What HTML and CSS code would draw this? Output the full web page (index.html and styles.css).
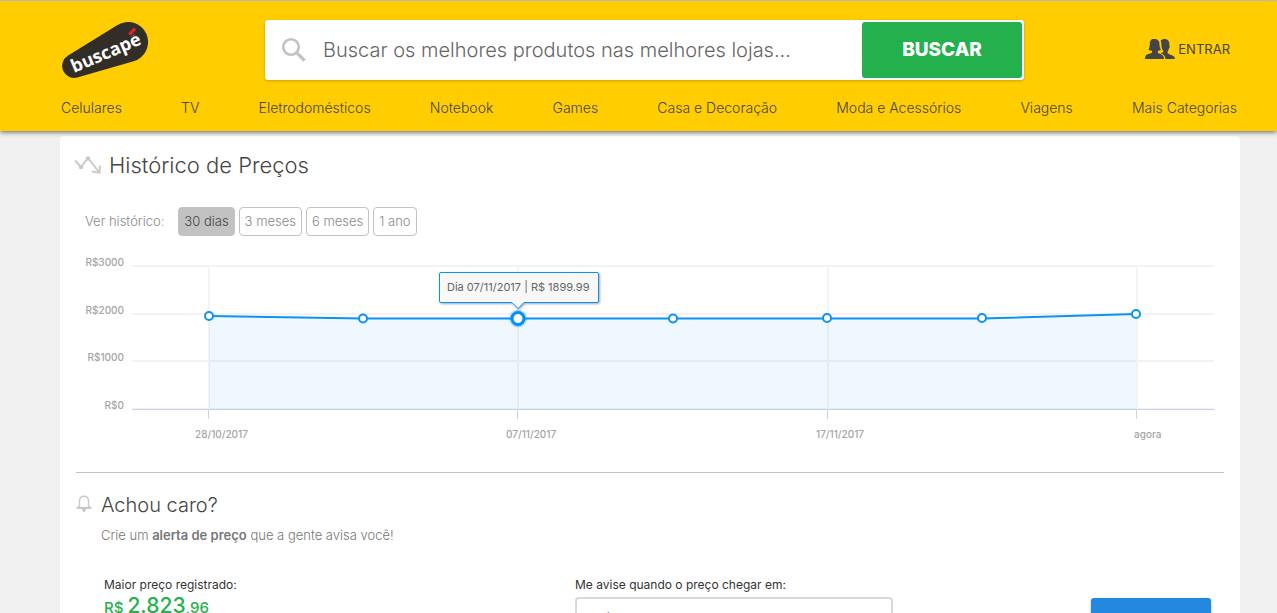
FILE: index.html
```html
<!DOCTYPE html>
<html lang="pt-BR">
<head>
<meta charset="utf-8">
<title>Buscapé - Histórico de Preços</title>
<link rel="stylesheet" href="styles.css">
</head>
<body>
<header class="header">
  <div class="topbar">
    <a class="logo" href="#" aria-label="buscapé">
      <svg width="86" height="56" viewBox="0 0 86 56">
        <path fill="#322e27" d="M5.7 33.8 55.5 3A20 20 0 1 1 71.6 39.2L15.3 55.5A12 12 0 0 1 5.7 33.8Z"/>
        <text class="logo-text" x="0" y="0" transform="translate(12 51) rotate(-23)">buscapé</text>
        <path stroke="#322e27" stroke-width="6" d="M68 12.600 72.600 8"/>
        <path stroke="#d9242c" stroke-width="3.4" d="M67.4 12.600 73 6.600"/>
      </svg>
    </a>
    <form class="search">
      <svg class="search-icon" width="26" height="26" viewBox="0 0 26 26" fill="none" stroke="#c3c3c3">
        <circle cx="10" cy="10" r="7.8" stroke-width="2.600"/>
        <path stroke-width="3.400" d="m15.600 15.600 8 8"/>
      </svg>
      <input class="search-input" type="text" aria-label="Buscar" placeholder="Buscar os melhores produtos nas melhores lojas...">
      <button class="search-button" type="button">BUSCAR</button>
    </form>
    <a class="login" href="#">
      <svg width="30" height="20" viewBox="0 0 30 20" fill="#454545">
        <path d="M9 0C5.8 0 4.800 2 4.800 5c0 2.600-.5 4.400-1.400 5.600 1 .9 2.300 1.200 3.600 1.200v1.600c-1.400 1.200-5.400 1.600-6.400 3.400C.1 17.800 0 19 0 20h19c0-1-.2-2.400-.8-3.200-1.200-1.600-4.200-2-5.400-3.400v-1.600c1.300 0 2.400-.4 3.200-1.200C14.800 9.200 14.600 7.400 14.500 5 14.400 2 12.800 0 9 0Z"/>
        <path d="M15.600 1.600C16.600.5 18 0 19.600 0c3.200 0 4.800 2 4.800 5 0 1-.1 1.400-.1 1.800.8.3.4 2.400-.4 2.800-.3 1.400-.8 2.200-1.300 2.800v1.800c1.200 1.200 4.600 1.800 6.200 3 1 .8 1.200 2.400 1.200 3.600h-9.600c0-1.600-.2-3.200-1.200-4.400-1-1-2.800-1.600-4-2.400 1.200 0 2.600-.6 3.400-1.600-1.800-2.400-2.200-4-2.200-7 0-1.400-.2-2.600-.8-3.800Z"/>
      </svg>
      <span>ENTRAR</span>
    </a>
  </div>
  <nav class="nav">
    <a href="#">Celulares</a>
    <a href="#">TV</a>
    <a href="#">Eletrodomésticos</a>
    <a href="#">Notebook</a>
    <a href="#">Games</a>
    <a href="#">Casa e Decoração</a>
    <a href="#">Moda e Acessórios</a>
    <a href="#">Viagens</a>
    <a href="#">Mais Categorias</a>
  </nav>
</header>
<main class="card">
  <section class="history">
    <h2 class="title">
      <svg width="28" height="20" viewBox="0 0 28 20" fill="none" stroke="#cacaca" stroke-width="2">
        <path d="M1 5.500 7 12 14 3l11 14"/>
        <path d="m18 16.500 7.500 1.200L26 10.500"/>
        <circle cx="7" cy="12" r="1.300"/>
        <circle cx="14" cy="3.500" r="1.300"/>
      </svg>
      Histórico de Preços
    </h2>
    <div class="periods">
      <span class="periods-label">Ver histórico:</span>
      <button class="period period-active" type="button">30 dias</button>
      <button class="period" type="button">3 meses</button>
      <button class="period" type="button">6 meses</button>
      <button class="period" type="button">1 ano</button>
    </div>
    <svg class="chart" viewBox="0 0 1148 200" role="img" aria-label="Histórico de preços">
      <g class="grid">
        <path d="M56 16H1138M56 64H1138M56 111H1138M56 159H1138"/>
        <path d="M133 16V159M442 16V159M752 16V159M1061 16V159"/>
      </g>
      <path class="area" d="M133 66 287 68.500H597L751 68H906L1060 64V159H133Z"/>
      <path class="axis" d="M56 159.500H1138M132.500 159V169M441.500 159V169M751.500 159V169M1060.500 159V169"/>
      <path class="line" d="M133 66 287 68.500H597L751 68.500H906L1060 64"/>
      <g class="points">
        <circle cx="133" cy="66" r="4"/>
        <circle cx="287" cy="68.500" r="4"/>
        <circle cx="597" cy="68.500" r="4"/>
        <circle cx="751" cy="68" r="4"/>
        <circle cx="906" cy="68" r="4"/>
        <circle cx="1060" cy="64" r="4"/>
      </g>
      <circle class="halo" cx="442" cy="68.500" r="9"/>
      <circle class="point-active" cx="442" cy="68.500" r="6"/>
      <path class="tooltip" d="M365 22.500H521Q522.500 22.500 522.500 24V51Q522.500 52.500 521 52.500H448L442 58.500 436 52.500H365Q363.500 52.500 363.500 51V24Q363.500 22.500 365 22.500Z"/>
      <text class="tooltip-text" x="371" y="41">Dia 07/11/2017 | R$ 1899.99</text>
      <g class="labels labels-y">
        <text x="48" y="16">R$3000</text>
        <text x="48" y="64">R$2000</text>
        <text x="48" y="111">R$1000</text>
        <text x="48" y="159">R$0</text>
      </g>
      <g class="labels">
        <text x="119" y="188">28/10/2017</text>
        <text x="430" y="188">07/11/2017</text>
        <text x="740" y="188">17/11/2017</text>
        <text x="1058" y="188">agora</text>
      </g>
    </svg>
  </section>
  <section class="alert">
    <div class="alert-head">
      <svg class="bell" width="16" height="18" viewBox="0 0 16 18" fill="none" stroke="#c8c8c8" stroke-width="1.400">
        <path d="M3.500 11V6C3.500 2.800 5 1.200 8 1.200S12.500 2.800 12.500 6v5L14.600 12.800H1.400Z"/>
        <path d="M1.500 13.200h13M6 14.800h4M7 16.200h2"/>
      </svg>
      <div>
        <h2 class="subtitle">Achou caro?</h2>
        <p class="lead">Crie um <b>alerta de preço</b> que a gente avisa você!</p>
      </div>
    </div>
    <div class="alert-form">
      <div>
        <div class="field-label">Maior preço registrado:</div>
        <div class="price">R$ <span class="price-main">2.823</span>,96</div>
      </div>
      <div>
        <label class="field-label" for="target">Me avise quando o preço chegar em:</label>
        <input class="target" id="target" type="text" value="R$">
      </div>
      <button class="create" type="button" aria-label="Criar alerta"></button>
    </div>
  </section>
</main>
</body>
</html>
```
FILE: styles.css
```css
* { box-sizing: border-box; }
html { height: 100%; overflow: hidden; }
body {
  margin: 0;
  background: #f0f0f0;
  color: #454545;
  font-family: Inter, "Open Sans", sans-serif;
  font-size: 13px;
  font-weight: 300;
}
a { color: inherit; text-decoration: none; }
h2, p { margin: 0; font-weight: 300; }
button, input { font-family: inherit; }

.header {
  position: relative;
  padding: 19px 37px 13px 60px;
  border-top: 1px solid #b8b8b8;
  background: #ffcd00;
  box-shadow: 0 1px 5px rgba(0, 0, 0, .6);
}
.topbar { display: flex; align-items: center; }
.logo { display: flex; flex: 0 0 205px; padding-left: 2px; }
.logo-text {
  fill: #fff;
  font-family: "Open Sans", sans-serif;
  font-size: 18px;
  font-weight: 700;
}
.search {
  display: flex;
  flex: 1;
  align-items: center;
  height: 60px;
  padding: 2px;
  border-radius: 3px;
  background: #fff;
  box-shadow: 0 1px 3px rgba(0, 0, 0, .2);
}
.search-icon { flex: none; margin-left: 14px; }
.search-input {
  flex: 1;
  min-width: 0;
  height: 56px;
  padding: 0 16px;
  border: 0;
  background: none;
  font-size: 20px;
  font-weight: 300;
  outline: 0;
}
.search-input::placeholder { color: #666; opacity: 1; }
.search-button {
  width: 160px;
  height: 56px;
  padding: 0 0 2px;
  border: 0;
  border-radius: 3px;
  background: #24b14d;
  color: #fff;
  font-size: 19px;
  font-weight: 800;
}
.login {
  display: flex;
  flex: 0 0 216px;
  align-items: center;
  justify-content: flex-end;
  gap: 3px;
  padding: 0 10px 2px 0;
  font-weight: 400;
}
.nav {
  display: flex;
  justify-content: space-between;
  margin-top: 18px;
  padding: 0 3px 0 1px;
  font-size: 14px;
  line-height: 20px;
}

.card {
  margin: 5px 37px 0 60px;
  padding: 0 16px 32px;
  border-radius: 4px;
  background: #fff;
}
.history { border-bottom: 1px solid #c2c2c2; padding-bottom: 22px; }
.title {
  display: flex;
  align-items: center;
  gap: 7px;
  padding-top: 13px;
  font-size: 22px;
  line-height: 32px;
}
.title svg { margin-left: -2px; }
.periods {
  display: flex;
  align-items: center;
  gap: 4px;
  margin: 26px 0 14px 9px;
  color: #8a8a8a;
}
.periods-label { margin-right: 10px; padding-bottom: 2px; }
.period {
  height: 29px;
  padding: 0 5px 2px;
  border: 1px solid #c2c2c2;
  border-radius: 4px;
  background: #fff;
  color: #8a8a8a;
  font-size: 13px;
  font-weight: 300;
}
.period-active { background: #c2c2c2; color: #454545; }

.chart { display: block; width: 100%; height: auto; }
.grid { fill: none; stroke: #f3f3f3; stroke-width: 2; }
.area { fill: #0080f8; fill-opacity: .06; }
.axis { fill: none; stroke: #c6d2e6; }
.line { fill: none; stroke: #0c92f2; stroke-width: 2; }
.points { fill: #fff; stroke: #0c92f2; stroke-width: 2; }
.halo { fill: #0090f8; fill-opacity: .3; }
.point-active { fill: #fff; stroke: #0090f8; stroke-width: 3; }
.tooltip {
  fill: #f8f8f8;
  stroke: #0c92f2;
  filter: drop-shadow(1px 1px 1px rgba(0, 0, 0, .35));
}
.tooltip-text { fill: #666; font-size: 11px; font-weight: 400; }
.labels { fill: #a4a4a4; font-size: 10px; font-weight: 500; }
.labels-y { text-anchor: end; }

.alert-head { display: flex; gap: 9px; padding-top: 19px; }
.bell { margin-top: 3px; }
.subtitle { font-size: 20px; line-height: 26px; }
.lead { margin-top: 8px; color: #777; line-height: 18px; }
.lead b { font-weight: 600; }
.alert-form {
  display: grid;
  grid-template-columns: 471fr 516fr 120px;
  align-items: start;
  padding: 32px 13px 0 28px;
}
.field-label {
  display: block;
  color: #333;
  font-size: 12px;
  font-weight: 400;
  line-height: 18px;
}
.price { color: #24b14d; font-size: 15px; font-weight: 500; line-height: 24px; }
.price-main { font-size: 21px; }
.target {
  width: 318px;
  height: 48px;
  margin-top: 3px;
  padding: 0 14px;
  border: 2px solid #d8d8d8;
  border-radius: 4px;
  color: #333;
  font-size: 18px;
}
.create {
  height: 48px;
  margin-top: 22px;
  border: 0;
  border-radius: 3px;
  background: #2388e0;
  box-shadow: 0 1px 3px rgba(0, 0, 0, .3);
}
```
